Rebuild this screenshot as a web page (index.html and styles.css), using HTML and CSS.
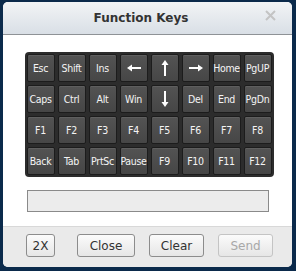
FILE: index.html
```html
<!DOCTYPE html>
<html>
<head>
<meta charset="utf-8">
<link rel="stylesheet" href="styles.css">
</head>
<body>
<div class="dialog">
  <div class="header">
    <span class="title">Function Keys</span>
    <span class="close-x"><svg width="11" height="11" viewBox="0 0 11 11"><path d="M1 1L10 10M10 1L1 10" stroke="#c4c4c4" stroke-width="2"/></svg></span>
  </div>
  <div class="content">
    <div class="keys">
      <div class="key">Esc</div>
      <div class="key">Shift</div>
      <div class="key">Ins</div>
      <div class="key"><svg width="14" height="8" viewBox="0 0 14 8"><path d="M14 4H4" stroke="#fff" stroke-width="2"/><path d="M0 4L5 0.5V7.5Z" fill="#fff"/></svg></div>
      <div class="key"><svg width="8" height="16" viewBox="0 0 8 16"><path d="M4 16V4" stroke="#fff" stroke-width="2"/><path d="M4 0L0.5 5H7.5Z" fill="#fff"/></svg></div>
      <div class="key"><svg width="14" height="8" viewBox="0 0 14 8"><path d="M0 4H10" stroke="#fff" stroke-width="2"/><path d="M14 4L9 0.5V7.5Z" fill="#fff"/></svg></div>
      <div class="key">Home</div>
      <div class="key">PgUP</div>
      <div class="key">Caps</div>
      <div class="key">Ctrl</div>
      <div class="key">Alt</div>
      <div class="key">Win</div>
      <div class="key"><svg width="8" height="16" viewBox="0 0 8 16"><path d="M4 0V12" stroke="#fff" stroke-width="2"/><path d="M4 16L0.5 11H7.5Z" fill="#fff"/></svg></div>
      <div class="key">Del</div>
      <div class="key">End</div>
      <div class="key">PgDn</div>
      <div class="key">F1</div>
      <div class="key">F2</div>
      <div class="key">F3</div>
      <div class="key">F4</div>
      <div class="key">F5</div>
      <div class="key">F6</div>
      <div class="key">F7</div>
      <div class="key">F8</div>
      <div class="key">Back</div>
      <div class="key">Tab</div>
      <div class="key">PrtSc</div>
      <div class="key">Pause</div>
      <div class="key">F9</div>
      <div class="key">F10</div>
      <div class="key">F11</div>
      <div class="key">F12</div>
    </div>
    <div class="field"></div>
  </div>
  <div class="footer">
    <button class="btn btn-2x">2X</button>
    <button class="btn btn-close">Close</button>
    <button class="btn btn-clear">Clear</button>
    <button class="btn btn-send" disabled>Send</button>
  </div>
</div>
</body>
</html>
```
FILE: styles.css
```css
html, body {
  margin: 0;
  padding: 0;
}
body {
  background: #0b2a4b;
  width: 296px;
  height: 271px;
  overflow: hidden;
  font-family: "DejaVu Sans", sans-serif;
}
.dialog {
  margin: 2px 4px 0 3px;
  width: 289px;
  height: 265px;
  background: #fff;
  border-radius: 5px;
  overflow: hidden;
  display: flex;
  flex-direction: column;
}
.header {
  height: 32px;
  border-bottom: 1px solid #8e9296;
  background: linear-gradient(#f2f4f6, #d9dfe6);
  display: flex;
  align-items: center;
  position: relative;
}
.title {
  flex: 1;
  text-align: center;
  padding-right: 13px;
  font-weight: bold;
  font-size: 12px;
  color: #333;
}
.close-x {
  position: absolute;
  right: 16px;
  top: 8px;
  line-height: 0;
}
.content {
  flex: 1;
  display: flex;
  flex-direction: column;
  align-items: center;
  padding-top: 17px;
}
.keys {
  display: grid;
  grid-template-columns: repeat(8, 28px);
  grid-auto-rows: 28px;
  gap: 3px;
  padding: 2px;
  background: #2c2c2c;
  border-radius: 4px;
  margin-left: 3px;
}
.key {
  box-sizing: border-box;
  border: 1px solid #1c1c1c;
  border-radius: 2px;
  background: linear-gradient(#535353, #464646);
  box-shadow: inset 0 1px 0 rgba(255,255,255,0.07);
  color: #f4f4f4;
  font-family: "DejaVu Sans Condensed", "DejaVu Sans", sans-serif;
  font-size: 10.5px;
  letter-spacing: -0.3px;
  display: flex;
  align-items: center;
  justify-content: center;
  white-space: nowrap;
}
.field {
  margin-top: 13px;
  width: 242px;
  height: 22px;
  box-sizing: border-box;
  border: 1px solid #8a8a8a;
  background: #ececec;
}
.footer {
  height: 41px;
  box-sizing: border-box;
  border-top: 1px solid #d8d8d8;
  background: #eaeaea;
  display: flex;
  align-items: flex-start;
  padding: 7px 0 0 23px;
}
.btn {
  height: 23px;
  box-sizing: border-box;
  border: 1px solid #8c8c8c;
  border-radius: 3px;
  background: linear-gradient(#fbfbfb, #e6e6e6);
  font-family: "DejaVu Sans", sans-serif;
  font-size: 12px;
  color: #333;
  padding: 0;
}
.btn-2x { width: 29px; }
.btn-close { width: 58px; margin-left: 22px; }
.btn-clear { width: 55px; margin-left: 14px; }
.btn-send { width: 55px; margin-left: 14px; color: #a8a8a8; border-color: #c4c4c4; }
```
